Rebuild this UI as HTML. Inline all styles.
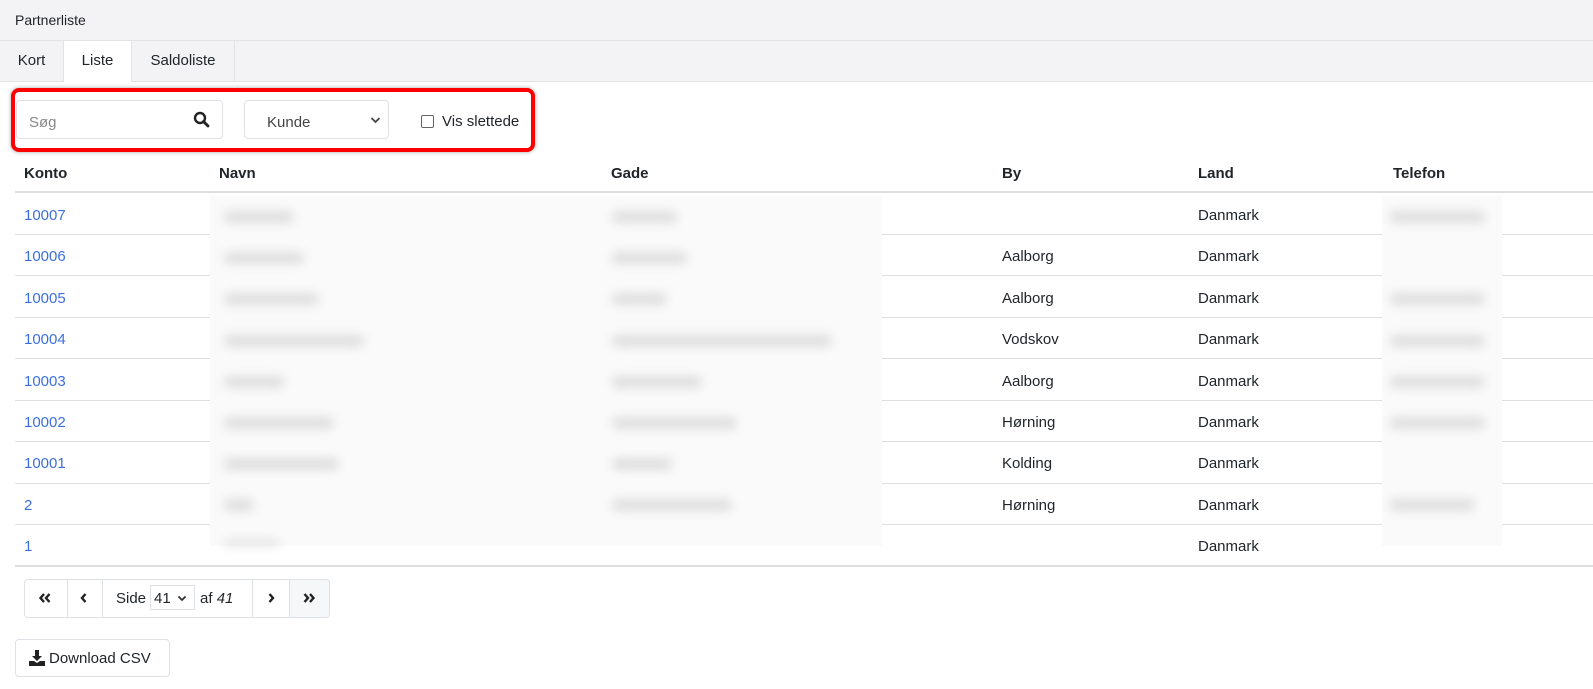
<!DOCTYPE html>
<html><head><meta charset="utf-8"><style>
*{box-sizing:border-box;margin:0;padding:0}
body{width:1593px;height:689px;position:relative;background:#fff;font-family:"Liberation Sans",sans-serif;font-size:15px;color:#212529;overflow:hidden}
.a{position:absolute}
.top{left:0;top:0;width:1593px;height:41px;background:#f3f3f5;border-bottom:1px solid #e3e3e6}
.tabs{left:0;top:41px;width:1593px;height:41px;background:#f3f3f5;border-bottom:1px solid #e3e3e6}
.tab{position:absolute;top:0;height:41px;line-height:40px;text-align:center;font-size:15px}
.hl{left:0;height:2px;width:1593px}
.txt{white-space:nowrap;line-height:18px}
.lnk{color:#3b6fe0}
.blur{background:#fafafa}
.bar{position:absolute;height:12px;background:#dedede;border-radius:6px;filter:blur(5px)}
.ln{position:absolute;left:15px;width:1578px;height:1px;background:#dedede}
</style></head><body>
<div class="a top"><div class="a txt" style="left:15px;top:11px;font-size:14px">Partnerliste</div></div>
<div class="a tabs">
 <div class="tab" style="left:0;width:63px">Kort</div>
 <div class="tab" style="left:63px;width:69px;background:#fff;height:41px;border-left:1px solid #e3e3e6;border-right:1px solid #e3e3e6">Liste</div>
 <div class="tab" style="left:132px;width:103px;border-right:1px solid #e3e3e6">Saldoliste</div>
</div>
<div class="a" style="left:11px;top:88px;width:524px;height:64px;border:4px solid #f00;border-radius:8px;box-shadow:0 0 4px rgba(0,0,0,.35)"></div>
<div class="a" style="left:16px;top:100px;width:207px;height:39px;border:1px solid #dee2e6;border-radius:4px"></div>
<div class="a txt" style="left:29px;top:114px;color:#888">Søg</div>
<svg class="a" style="left:193px;top:111px" width="17" height="17" viewBox="0 0 17 17"><circle cx="7" cy="7" r="5" fill="none" stroke="#222" stroke-width="2.4"/><path d="M10.5 10.5L15 15" stroke="#222" stroke-width="2.8" stroke-linecap="round"/></svg>
<div class="a" style="left:244px;top:100px;width:145px;height:39px;border:1px solid #dee2e6;border-radius:4px"></div>
<div class="a txt" style="left:267px;top:114px;color:#444">Kunde</div>
<svg class="a" style="left:370px;top:116px" width="11" height="8" viewBox="0 0 11 8"><path d="M1.5 2L5.5 6L9.5 2" fill="none" stroke="#444" stroke-width="1.8"/></svg>
<div class="a" style="left:421px;top:115px;width:13px;height:13px;border:1px solid #666;border-radius:2px"></div>
<div class="a txt" style="left:442px;top:113px">Vis slettede</div>

<div class="a txt" style="left:24px;top:165px;font-weight:bold">Konto</div>
<div class="a txt" style="left:219px;top:165px;font-weight:bold">Navn</div>
<div class="a txt" style="left:611px;top:165px;font-weight:bold">Gade</div>
<div class="a txt" style="left:1002px;top:165px;font-weight:bold">By</div>
<div class="a txt" style="left:1198px;top:165px;font-weight:bold">Land</div>
<div class="a txt" style="left:1393px;top:165px;font-weight:bold">Telefon</div>
<div class="a hl" style="left:15px;top:191px;background:#dedede;width:1578px"></div>

<div class="ln" style="top:234px"></div>
<div class="ln" style="top:275px"></div>
<div class="ln" style="top:317px"></div>
<div class="ln" style="top:358px"></div>
<div class="ln" style="top:400px"></div>
<div class="ln" style="top:441px"></div>
<div class="ln" style="top:483px"></div>
<div class="ln" style="top:524px"></div>
<div class="a hl" style="left:15px;top:565px;background:#dedede;width:1578px"></div>

<div class="a blur" style="left:210px;top:196px;width:672px;height:350px">
 <div class="bar" style="left:14px;top:15px;width:70px"></div><div class="bar" style="left:402px;top:15px;width:65px"></div>
 <div class="bar" style="left:14px;top:56px;width:80px"></div><div class="bar" style="left:402px;top:56px;width:75px"></div>
 <div class="bar" style="left:14px;top:97px;width:95px"></div><div class="bar" style="left:402px;top:97px;width:55px"></div>
 <div class="bar" style="left:14px;top:139px;width:140px"></div><div class="bar" style="left:402px;top:139px;width:220px"></div>
 <div class="bar" style="left:14px;top:180px;width:60px"></div><div class="bar" style="left:402px;top:180px;width:90px"></div>
 <div class="bar" style="left:14px;top:221px;width:110px"></div><div class="bar" style="left:402px;top:221px;width:125px"></div>
 <div class="bar" style="left:14px;top:262px;width:115px"></div><div class="bar" style="left:402px;top:262px;width:60px"></div>
 <div class="bar" style="left:14px;top:303px;width:30px"></div><div class="bar" style="left:402px;top:303px;width:120px"></div>
 <div class="bar" style="left:14px;top:344px;width:55px;height:6px"></div>
</div>
<div class="a blur" style="left:1382px;top:196px;width:120px;height:350px">
 <div class="bar" style="left:8px;top:15px;width:95px"></div>
 <div class="bar" style="left:8px;top:97px;width:95px"></div>
 <div class="bar" style="left:8px;top:139px;width:95px"></div>
 <div class="bar" style="left:8px;top:180px;width:95px"></div>
 <div class="bar" style="left:8px;top:221px;width:95px"></div>
 <div class="bar" style="left:8px;top:303px;width:85px"></div>
</div>

<div class="a txt lnk" style="left:24px;top:207px">10007</div>
<div class="a txt lnk" style="left:24px;top:248px">10006</div>
<div class="a txt lnk" style="left:24px;top:290px">10005</div>
<div class="a txt lnk" style="left:24px;top:331px">10004</div>
<div class="a txt lnk" style="left:24px;top:373px">10003</div>
<div class="a txt lnk" style="left:24px;top:414px">10002</div>
<div class="a txt lnk" style="left:24px;top:455px">10001</div>
<div class="a txt lnk" style="left:24px;top:497px">2</div>
<div class="a txt lnk" style="left:24px;top:538px">1</div>

<div class="a txt" style="left:1002px;top:248px">Aalborg</div>
<div class="a txt" style="left:1002px;top:290px">Aalborg</div>
<div class="a txt" style="left:1002px;top:331px">Vodskov</div>
<div class="a txt" style="left:1002px;top:373px">Aalborg</div>
<div class="a txt" style="left:1002px;top:414px">Hørning</div>
<div class="a txt" style="left:1002px;top:455px">Kolding</div>
<div class="a txt" style="left:1002px;top:497px">Hørning</div>

<div class="a txt" style="left:1198px;top:207px">Danmark</div>
<div class="a txt" style="left:1198px;top:248px">Danmark</div>
<div class="a txt" style="left:1198px;top:290px">Danmark</div>
<div class="a txt" style="left:1198px;top:331px">Danmark</div>
<div class="a txt" style="left:1198px;top:373px">Danmark</div>
<div class="a txt" style="left:1198px;top:414px">Danmark</div>
<div class="a txt" style="left:1198px;top:455px">Danmark</div>
<div class="a txt" style="left:1198px;top:497px">Danmark</div>
<div class="a txt" style="left:1198px;top:538px">Danmark</div>

<div class="a" style="left:24px;top:579px;width:306px;height:39px;border:1px solid #dee2e6;border-radius:4px;overflow:hidden">
 <div class="a" style="left:42px;top:0;width:1px;height:39px;background:#dee2e6"></div>
 <div class="a" style="left:77px;top:0;width:1px;height:39px;background:#dee2e6"></div>
 <div class="a" style="left:227px;top:0;width:1px;height:39px;background:#dee2e6"></div>
 <div class="a" style="left:264px;top:0;width:41px;height:39px;background:#f6f7f9;border-left:1px solid #dee2e6"></div>
</div>
<svg class="a" style="left:38px;top:592px" width="14" height="12" viewBox="0 0 14 12"><path d="M6 2L2.5 6L6 10M11.5 2L8 6L11.5 10" fill="none" stroke="#222" stroke-width="2.4"/></svg>
<svg class="a" style="left:80px;top:592px" width="8" height="12" viewBox="0 0 8 12"><path d="M5.5 2L2 6L5.5 10" fill="none" stroke="#222" stroke-width="2.4"/></svg>
<div class="a txt" style="left:116px;top:590px">Side</div>
<div class="a" style="left:150px;top:585px;width:45px;height:25px;border:1px solid #dee2e6"></div>
<div class="a txt" style="left:154px;top:590px">41</div>
<svg class="a" style="left:177px;top:595px" width="10" height="7" viewBox="0 0 10 7"><path d="M1.5 1.5L5 5L8.5 1.5" fill="none" stroke="#333" stroke-width="1.8"/></svg>
<div class="a txt" style="left:200px;top:590px">af <i>41</i></div>
<svg class="a" style="left:267px;top:592px" width="8" height="12" viewBox="0 0 8 12"><path d="M2.5 2L6 6L2.5 10" fill="none" stroke="#222" stroke-width="2.4"/></svg>
<svg class="a" style="left:302px;top:592px" width="14" height="12" viewBox="0 0 14 12"><path d="M2.5 2L6 6L2.5 10M8 2L11.5 6L8 10" fill="none" stroke="#222" stroke-width="2.4"/></svg>

<div class="a" style="left:15px;top:639px;width:155px;height:38px;border:1px solid #dee2e6;border-radius:4px"></div>
<svg class="a" style="left:29px;top:650px" width="16" height="16" viewBox="0 0 16 16"><path d="M6 0h4v6h3l-5 5-5-5h3z" fill="#222"/><path d="M0 11h5l3 2 3-2h5v5H0z" fill="#222"/></svg>
<div class="a txt" style="left:49px;top:650px">Download CSV</div>
</body></html>
